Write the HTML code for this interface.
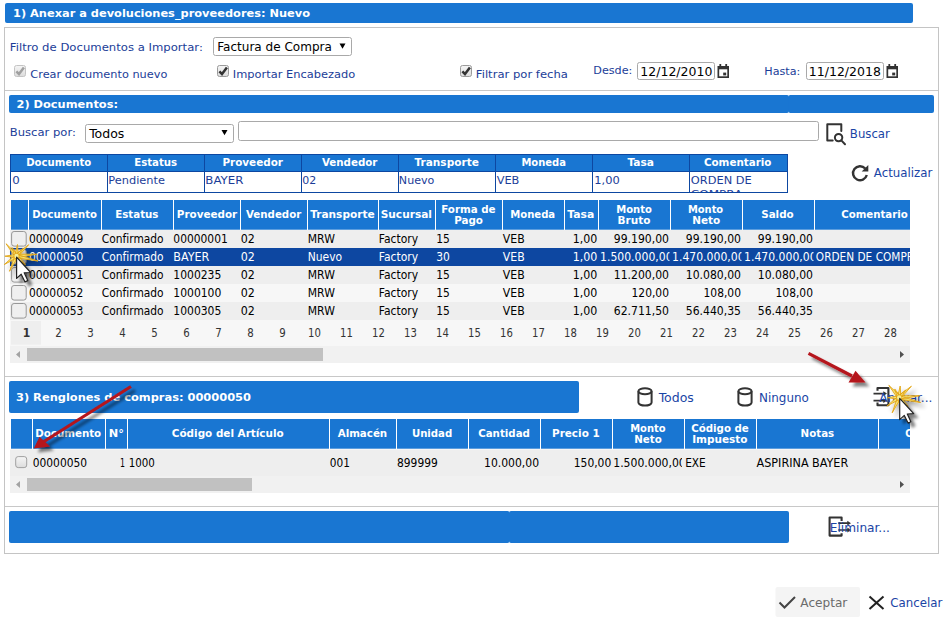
<!DOCTYPE html>
<html lang="es"><head><meta charset="utf-8"><title>Anexar a devoluciones_proveedores</title>
<style>
html,body{margin:0;padding:0;background:#fff;overflow:hidden}
svg{display:block}
.vb{font-family:'DejaVu Sans','Liberation Sans',sans-serif;font-weight:bold;font-size:11px;fill:#fff}
.hb{font-family:'DejaVu Sans','Liberation Sans',sans-serif;font-weight:bold;font-size:10px;fill:#fff}
.v{font-family:'DejaVu Sans','Liberation Sans',sans-serif;font-size:11px;fill:#1b3d98}
.t{font-family:'DejaVu Sans Condensed','Liberation Sans',sans-serif;font-size:12px;fill:#000}
.ts{font-family:'DejaVu Sans Condensed','Liberation Sans',sans-serif;font-size:12px;fill:#fff}
.tp{font-family:'DejaVu Sans Condensed','Liberation Sans',sans-serif;font-size:12px;fill:#333}
.ti{font-family:'DejaVu Sans Condensed','Liberation Sans',sans-serif;font-size:12.7px;fill:#000}
.tb{font-family:'DejaVu Sans Condensed','Liberation Sans',sans-serif;font-size:13px;fill:#1a44a5}
</style></head><body>
<svg width="946" height="617" viewBox="0 0 946 617">
<defs>
<filter id="sh" x="-40%" y="-40%" width="200%" height="200%"><feGaussianBlur in="SourceAlpha" stdDeviation="1.8"/><feOffset dx="3.5" dy="3.5"/><feComponentTransfer><feFuncA type="linear" slope="0.5"/></feComponentTransfer><feMerge><feMergeNode/><feMergeNode in="SourceGraphic"/></feMerge></filter>
<filter id="sh2" x="-40%" y="-40%" width="200%" height="200%"><feGaussianBlur in="SourceAlpha" stdDeviation="2"/><feOffset dx="4" dy="4"/><feComponentTransfer><feFuncA type="linear" slope="0.4"/></feComponentTransfer><feMerge><feMergeNode/><feMergeNode in="SourceGraphic"/></feMerge></filter>
<linearGradient id="cbg" x1="0" y1="0" x2="0" y2="1"><stop offset="0" stop-color="#f6f6f6"/><stop offset="1" stop-color="#dcdcdc"/></linearGradient>
<g id="star"><path d="M1.7,0.1 L1,-11.5 L-1.7,-0.1 Z M1.2,1.2 L12.2,-11.3 L-1.2,-1.2 Z M0.1,1.7 L20.5,-1.8 L-0.1,-1.7 Z M-0.4,1.7 L21.5,5 L0.4,-1.7 Z M-1.2,1.2 L9,9 L1.2,-1.2 Z M-1.7,0.3 L2,12 L1.7,-0.3 Z M-1.5,-0.7 L-7,15.3 L1.5,0.7 Z M-1.0,-1.4 L-12.3,8.6 L1.0,1.4 Z M-0.0,-1.7 L-11.6,0.2 L0.0,1.7 Z M1.3,-1.1 L-10.4,-12.2 L-1.3,1.1 Z M1.5,-0.8 L-4.5,-8.5 L-1.5,0.8 Z M1.3,1.1 L6.5,-7.5 L-1.3,-1.1 Z" fill="#f8e56f" fill-opacity="0.9" stroke="#e2a516" stroke-width="0.9" stroke-linejoin="round"/><circle r="2.2" fill="#f4ee9a"/></g>
<g id="cur"><path d="M0,0 L0,21.2 L4.6,17 L8.4,24.7 L11.2,23.4 L7.6,15.6 L14,15.3 Z" fill="#fff" stroke="#222" stroke-width="1.2" stroke-linejoin="round"/></g>
<g id="cyl" fill="none" stroke="#333" stroke-width="2"><path d="M1.9,4.2 V15.6 a6.6,3 0 0 0 13.2,0 V4.2"/><ellipse cx="8.5" cy="4.2" rx="6.6" ry="3"/></g>
<g id="cal"><path d="M0.5,2 h11.5 v12 h-11.5 z" fill="#333"/><rect x="2.4" y="0" width="1.8" height="3" fill="#333"/><rect x="8.3" y="0" width="1.8" height="3" fill="#333"/><rect x="2.2" y="5.3" width="8.1" height="7" fill="#fff"/><rect x="6.2" y="8.6" width="3" height="2.8" fill="#333"/></g>
</defs>

<rect x="5" y="3" width="908" height="20" fill="#1976d2" rx="2" />
<text x="13.0" y="17" class="vb" textLength="297" lengthAdjust="spacingAndGlyphs" >1) Anexar a devoluciones_proveedores: Nuevo</text>
<rect x="4.5" y="27.5" width="934" height="526" fill="#fff" stroke="#c4c4c4" stroke-width="1" />
<line x1="5" y1="90.5" x2="938" y2="90.5" stroke="#c8c8c8" stroke-width="1"/>
<line x1="5" y1="376.5" x2="938" y2="376.5" stroke="#c8c8c8" stroke-width="1"/>
<line x1="5" y1="506.5" x2="938" y2="506.5" stroke="#c8c8c8" stroke-width="1"/>
<text x="9.85" y="51.1" class="v" textLength="193.0" lengthAdjust="spacingAndGlyphs" >Filtro de Documentos a Importar:</text>
<rect x="213.5" y="37.5" width="138" height="18" fill="#fff" rx="2" stroke="#a9a9a9" stroke-width="1" />
<text x="217.35" y="50.7" class="ti" textLength="114.5" lengthAdjust="spacingAndGlyphs" >Factura de Compra</text>
<path d="M339.5,43.5 h6 l-3,5.2 z" fill="#000"/>
<rect x="14.5" y="65.5" width="11" height="11" fill="url(#cbg)" rx="2" stroke="#c4c4c4" stroke-width="1" />
<path d="M16.4,71.3 l2.6,2.7 l4.9,-6.4" fill="none" stroke="#a0a0a0" stroke-width="2.5"/>
<text x="30.35" y="77.7" class="v" textLength="137" lengthAdjust="spacingAndGlyphs" >Crear documento nuevo</text>
<rect x="217.5" y="65.5" width="11" height="11" fill="url(#cbg)" rx="2" stroke="#9b9b9b" stroke-width="1" />
<path d="M219.4,71.3 l2.6,2.7 l4.9,-6.4" fill="none" stroke="#333" stroke-width="2.5"/>
<text x="232.85" y="78" class="v" textLength="122.5" lengthAdjust="spacingAndGlyphs" >Importar Encabezado</text>
<rect x="460.5" y="65.5" width="11" height="11" fill="url(#cbg)" rx="2" stroke="#9b9b9b" stroke-width="1" />
<path d="M462.4,71.3 l2.6,2.7 l4.9,-6.4" fill="none" stroke="#333" stroke-width="2.5"/>
<text x="475.85" y="78" class="v" textLength="92.0" lengthAdjust="spacingAndGlyphs" >Filtrar por fecha</text>
<text x="593.35" y="74.3" class="v" textLength="39" lengthAdjust="spacingAndGlyphs" >Desde:</text>
<rect x="637.5" y="62.5" width="77" height="17" fill="#fff" rx="2" stroke="#a9a9a9" stroke-width="1" />
<text x="640.35" y="76" class="ti" textLength="72" lengthAdjust="spacingAndGlyphs" >12/12/2010</text>
<use href="#cal" x="717" y="64"/>
<text x="764.35" y="74.5" class="v" textLength="36" lengthAdjust="spacingAndGlyphs" >Hasta:</text>
<rect x="806.5" y="62.5" width="77" height="17" fill="#fff" rx="2" stroke="#a9a9a9" stroke-width="1" />
<text x="808.85" y="76" class="ti" textLength="72.0" lengthAdjust="spacingAndGlyphs" >11/12/2018</text>
<use href="#cal" x="886" y="64"/>
<rect x="9" y="95" width="780" height="18" fill="#1976d2" rx="2" />
<rect x="788.4" y="95" width="145.6" height="18" fill="#1976d2" rx="2" />
<text x="16.5" y="108" class="vb" textLength="101.5" lengthAdjust="spacingAndGlyphs" >2) Documentos:</text>
<text x="9.85" y="136" class="v" textLength="66.0" lengthAdjust="spacingAndGlyphs" >Buscar por:</text>
<rect x="85.5" y="124.5" width="148" height="18" fill="#fff" rx="2" stroke="#a9a9a9" stroke-width="1" />
<text x="89.35" y="137.7" class="ti" textLength="35" lengthAdjust="spacingAndGlyphs" >Todos</text>
<path d="M221.5,130 h6 l-3,5.2 z" fill="#000"/>
<rect x="238.5" y="121.5" width="580" height="19" fill="#fff" rx="2" stroke="#a9a9a9" stroke-width="1" />
<g fill="none" stroke="#333" stroke-width="2" stroke-linejoin="round" stroke-linecap="round"><path d="M841.3,131 V124.2 H827.3 V140.6 H832.7"/><circle cx="838.6" cy="137.6" r="3.7"/><path d="M841.3,140.4 L845,144.2"/></g>
<text x="849.85" y="137.8" class="tb" textLength="40.0" lengthAdjust="spacingAndGlyphs" >Buscar</text>
<rect x="10.5" y="154.5" width="777" height="38" fill="#fff" />
<rect x="10.5" y="154.5" width="777" height="17" fill="#1976d2" />
<text x="26.2" y="166.1" class="hb" textLength="65.0" lengthAdjust="spacingAndGlyphs" >Documento</text>
<text x="134.2" y="166.1" class="hb" textLength="43.0" lengthAdjust="spacingAndGlyphs" >Estatus</text>
<text x="222.45" y="166.1" class="hb" textLength="60.5" lengthAdjust="spacingAndGlyphs" >Proveedor</text>
<text x="321.95" y="166.1" class="hb" textLength="55.5" lengthAdjust="spacingAndGlyphs" >Vendedor</text>
<text x="414.45" y="166.1" class="hb" textLength="64.5" lengthAdjust="spacingAndGlyphs" >Transporte</text>
<text x="521.45" y="166.1" class="hb" textLength="44.5" lengthAdjust="spacingAndGlyphs" >Moneda</text>
<text x="627.4" y="166.1" class="hb" textLength="26.6" lengthAdjust="spacingAndGlyphs" >Tasa</text>
<text x="703.9" y="166.1" class="hb" textLength="67.6" lengthAdjust="spacingAndGlyphs" >Comentario</text>
<rect x="10.5" y="154.5" width="777" height="38" fill="none" stroke="#0d47a1" stroke-width="1" />
<line x1="10" y1="171.5" x2="788" y2="171.5" stroke="#0d47a1" stroke-width="1"/>
<line x1="107.5" y1="154" x2="107.5" y2="193" stroke="#0d47a1" stroke-width="1"/>
<line x1="204.5" y1="154" x2="204.5" y2="193" stroke="#0d47a1" stroke-width="1"/>
<line x1="301.5" y1="154" x2="301.5" y2="193" stroke="#0d47a1" stroke-width="1"/>
<line x1="398.5" y1="154" x2="398.5" y2="193" stroke="#0d47a1" stroke-width="1"/>
<line x1="495.5" y1="154" x2="495.5" y2="193" stroke="#0d47a1" stroke-width="1"/>
<line x1="592.5" y1="154" x2="592.5" y2="193" stroke="#0d47a1" stroke-width="1"/>
<line x1="689.5" y1="154" x2="689.5" y2="193" stroke="#0d47a1" stroke-width="1"/>
<text x="12.35" y="183.5" class="v" textLength="7.5" lengthAdjust="spacingAndGlyphs" >0</text>
<text x="108.35" y="183.5" class="v" textLength="56.6" lengthAdjust="spacingAndGlyphs" >Pendiente</text>
<text x="205.35" y="183.5" class="v" textLength="38" lengthAdjust="spacingAndGlyphs" >BAYER</text>
<text x="302.35" y="183.5" class="v" textLength="14" lengthAdjust="spacingAndGlyphs" >02</text>
<text x="398.85" y="183.5" class="v" textLength="35.5" lengthAdjust="spacingAndGlyphs" >Nuevo</text>
<text x="496.65" y="183.5" class="v" textLength="22.7" lengthAdjust="spacingAndGlyphs" >VEB</text>
<text x="594.35" y="183.5" class="v" textLength="25.4" lengthAdjust="spacingAndGlyphs" >1,00</text>
<svg x="689" y="172" width="98" height="20.5">
<text x="1.85" y="11.5" class="v" textLength="60.9" lengthAdjust="spacingAndGlyphs" >ORDEN DE</text>
<text x="1.85" y="25.6" class="v" textLength="51.5" lengthAdjust="spacingAndGlyphs" >COMPRA</text>
</svg>
<g fill="none" stroke="#333" stroke-width="2.4"><path d="M865.2,168.5 A7,7 0 1 0 866.8,175"/></g><path d="M868.3,165 v6.6 h-6.6 z" fill="#333"/>
<text x="873.85" y="177.4" class="tb" textLength="58.5" lengthAdjust="spacingAndGlyphs" >Actualizar</text>
<svg x="10" y="200" width="900" height="164">
<rect x="0" y="0" width="900" height="30" fill="#1976d2" />
<rect x="0" y="0" width="1" height="30" fill="#fff" />
<rect x="18" y="0" width="1" height="30" fill="#fff" />
<rect x="91" y="0" width="1" height="30" fill="#fff" />
<rect x="163" y="0" width="1" height="30" fill="#fff" />
<rect x="230" y="0" width="1" height="30" fill="#fff" />
<rect x="297" y="0" width="1" height="30" fill="#fff" />
<rect x="368" y="0" width="1" height="30" fill="#fff" />
<rect x="425" y="0" width="1" height="30" fill="#fff" />
<rect x="492" y="0" width="1" height="30" fill="#fff" />
<rect x="554" y="0" width="1" height="30" fill="#fff" />
<rect x="588" y="0" width="1" height="30" fill="#fff" />
<rect x="660" y="0" width="1" height="30" fill="#fff" />
<rect x="732" y="0" width="1" height="30" fill="#fff" />
<rect x="804" y="0" width="1" height="30" fill="#fff" />
<rect x="0" y="29.7" width="900" height="0.8" fill="#fbfbfb" />
<text x="22.2" y="18" class="hb" textLength="64.7" lengthAdjust="spacingAndGlyphs" >Documento</text>
<text x="105.2" y="18" class="hb" textLength="43.3" lengthAdjust="spacingAndGlyphs" >Estatus</text>
<text x="166.8" y="18" class="hb" textLength="60.4" lengthAdjust="spacingAndGlyphs" >Proveedor</text>
<text x="236.0" y="18" class="hb" textLength="55.2" lengthAdjust="spacingAndGlyphs" >Vendedor</text>
<text x="300.2" y="18" class="hb" textLength="64.5" lengthAdjust="spacingAndGlyphs" >Transporte</text>
<text x="370.7" y="18" class="hb" textLength="51.3" lengthAdjust="spacingAndGlyphs" >Sucursal</text>
<text x="431.2" y="13" class="hb" textLength="54.4" lengthAdjust="spacingAndGlyphs" >Forma de</text>
<text x="444.2" y="24" class="hb" textLength="28.8" lengthAdjust="spacingAndGlyphs" >Pago</text>
<text x="500.2" y="18" class="hb" textLength="45" lengthAdjust="spacingAndGlyphs" >Moneda</text>
<text x="557.2" y="18" class="hb" textLength="27" lengthAdjust="spacingAndGlyphs" >Tasa</text>
<text x="606.2" y="13" class="hb" textLength="35.6" lengthAdjust="spacingAndGlyphs" >Monto</text>
<text x="607.6" y="24" class="hb" textLength="32.9" lengthAdjust="spacingAndGlyphs" >Bruto</text>
<text x="677.9" y="13" class="hb" textLength="35.3" lengthAdjust="spacingAndGlyphs" >Monto</text>
<text x="682.2" y="24" class="hb" textLength="28" lengthAdjust="spacingAndGlyphs" >Neto</text>
<text x="751.2" y="18" class="hb" textLength="32.5" lengthAdjust="spacingAndGlyphs" >Saldo</text>
<text x="831.2" y="18" class="hb" textLength="66.5" lengthAdjust="spacingAndGlyphs" >Comentario</text>
<rect x="0" y="30" width="900" height="18" fill="#eeeeee" />
<rect x="1.6" y="31.5" width="14.6" height="14.6" fill="#efefef" rx="2.5" stroke="#979797" stroke-width="1" />
<text x="18.95" y="43" class="t" textLength="54.4" lengthAdjust="spacingAndGlyphs" >00000049</text>
<text x="91.85" y="43" class="t" textLength="61.8" lengthAdjust="spacingAndGlyphs" >Confirmado</text>
<text x="163.35" y="43" class="t" textLength="54.4" lengthAdjust="spacingAndGlyphs" >00000001</text>
<text x="230.65" y="43" class="t" textLength="14.1" lengthAdjust="spacingAndGlyphs" >02</text>
<text x="297.75" y="43" class="t" textLength="27.1" lengthAdjust="spacingAndGlyphs" >MRW</text>
<text x="368.85" y="43" class="t" textLength="39.2" lengthAdjust="spacingAndGlyphs" >Factory</text>
<text x="426.15" y="43" class="t" textLength="13.6" lengthAdjust="spacingAndGlyphs" >15</text>
<text x="492.75" y="43" class="t" textLength="21.9" lengthAdjust="spacingAndGlyphs" >VEB</text>
<text x="562.65" y="43" class="t" textLength="24.6" lengthAdjust="spacingAndGlyphs" >1,00</text>
<svg x="589.5" y="30" width="70.0" height="18">
<text x="14.25" y="13" class="t" textLength="55.2" lengthAdjust="spacingAndGlyphs" >99.190,00</text>
</svg>
<svg x="661.5" y="30" width="70.0" height="18">
<text x="14.25" y="13" class="t" textLength="55.2" lengthAdjust="spacingAndGlyphs" >99.190,00</text>
</svg>
<svg x="733.5" y="30" width="70.0" height="18">
<text x="14.25" y="13" class="t" textLength="55.2" lengthAdjust="spacingAndGlyphs" >99.190,00</text>
</svg>
<rect x="0" y="48" width="900" height="18" fill="#0d47a1" />
<rect x="1.6" y="49.5" width="14.6" height="14.6" fill="#e8e8e8" rx="2.5" stroke="#979797" stroke-width="1" />
<text x="18.95" y="61" class="ts" textLength="54.4" lengthAdjust="spacingAndGlyphs" >00000050</text>
<text x="91.85" y="61" class="ts" textLength="61.8" lengthAdjust="spacingAndGlyphs" >Confirmado</text>
<text x="163.35" y="61" class="ts" textLength="36" lengthAdjust="spacingAndGlyphs" >BAYER</text>
<text x="230.65" y="61" class="ts" textLength="14.1" lengthAdjust="spacingAndGlyphs" >02</text>
<text x="297.75" y="61" class="ts" textLength="34.4" lengthAdjust="spacingAndGlyphs" >Nuevo</text>
<text x="368.85" y="61" class="ts" textLength="39.2" lengthAdjust="spacingAndGlyphs" >Factory</text>
<text x="426.15" y="61" class="ts" textLength="13.6" lengthAdjust="spacingAndGlyphs" >30</text>
<text x="492.75" y="61" class="ts" textLength="21.9" lengthAdjust="spacingAndGlyphs" >VEB</text>
<text x="562.65" y="61" class="ts" textLength="24.6" lengthAdjust="spacingAndGlyphs" >1,00</text>
<svg x="589.5" y="48" width="70.0" height="18">
<text x="0.55" y="13" class="ts" textLength="72.5" lengthAdjust="spacingAndGlyphs" >1.500.000,00</text>
</svg>
<svg x="661.5" y="48" width="70.0" height="18">
<text x="0.55" y="13" class="ts" textLength="72.5" lengthAdjust="spacingAndGlyphs" >1.470.000,00</text>
</svg>
<svg x="733.5" y="48" width="70.0" height="18">
<text x="0.55" y="13" class="ts" textLength="72.5" lengthAdjust="spacingAndGlyphs" >1.470.000,00</text>
</svg>
<text x="805.85" y="61" class="ts" textLength="105.0" lengthAdjust="spacingAndGlyphs" >ORDEN DE COMPRA</text>
<rect x="0" y="66" width="900" height="18" fill="#eeeeee" />
<rect x="1.6" y="67.5" width="14.6" height="14.6" fill="#efefef" rx="2.5" stroke="#979797" stroke-width="1" />
<text x="18.95" y="79" class="t" textLength="54.4" lengthAdjust="spacingAndGlyphs" >00000051</text>
<text x="91.85" y="79" class="t" textLength="61.8" lengthAdjust="spacingAndGlyphs" >Confirmado</text>
<text x="163.35" y="79" class="t" textLength="48" lengthAdjust="spacingAndGlyphs" >1000235</text>
<text x="230.65" y="79" class="t" textLength="14.1" lengthAdjust="spacingAndGlyphs" >02</text>
<text x="297.75" y="79" class="t" textLength="27.1" lengthAdjust="spacingAndGlyphs" >MRW</text>
<text x="368.85" y="79" class="t" textLength="39.2" lengthAdjust="spacingAndGlyphs" >Factory</text>
<text x="426.15" y="79" class="t" textLength="13.6" lengthAdjust="spacingAndGlyphs" >15</text>
<text x="492.75" y="79" class="t" textLength="21.9" lengthAdjust="spacingAndGlyphs" >VEB</text>
<text x="562.65" y="79" class="t" textLength="24.6" lengthAdjust="spacingAndGlyphs" >1,00</text>
<svg x="589.5" y="66" width="70.0" height="18">
<text x="14.25" y="13" class="t" textLength="55.2" lengthAdjust="spacingAndGlyphs" >11.200,00</text>
</svg>
<svg x="661.5" y="66" width="70.0" height="18">
<text x="14.25" y="13" class="t" textLength="55.2" lengthAdjust="spacingAndGlyphs" >10.080,00</text>
</svg>
<svg x="733.5" y="66" width="70.0" height="18">
<text x="14.25" y="13" class="t" textLength="55.2" lengthAdjust="spacingAndGlyphs" >10.080,00</text>
</svg>
<rect x="0" y="84" width="900" height="18" fill="#f7f7f7" />
<rect x="1.6" y="85.5" width="14.6" height="14.6" fill="#efefef" rx="2.5" stroke="#979797" stroke-width="1" />
<text x="18.95" y="97" class="t" textLength="54.4" lengthAdjust="spacingAndGlyphs" >00000052</text>
<text x="91.85" y="97" class="t" textLength="61.8" lengthAdjust="spacingAndGlyphs" >Confirmado</text>
<text x="163.35" y="97" class="t" textLength="48" lengthAdjust="spacingAndGlyphs" >1000100</text>
<text x="230.65" y="97" class="t" textLength="14.1" lengthAdjust="spacingAndGlyphs" >02</text>
<text x="297.75" y="97" class="t" textLength="27.1" lengthAdjust="spacingAndGlyphs" >MRW</text>
<text x="368.85" y="97" class="t" textLength="39.2" lengthAdjust="spacingAndGlyphs" >Factory</text>
<text x="426.15" y="97" class="t" textLength="13.6" lengthAdjust="spacingAndGlyphs" >15</text>
<text x="492.75" y="97" class="t" textLength="21.9" lengthAdjust="spacingAndGlyphs" >VEB</text>
<text x="562.65" y="97" class="t" textLength="24.6" lengthAdjust="spacingAndGlyphs" >1,00</text>
<svg x="589.5" y="84" width="70.0" height="18">
<text x="32.05" y="13" class="t" textLength="37.4" lengthAdjust="spacingAndGlyphs" >120,00</text>
</svg>
<svg x="661.5" y="84" width="70.0" height="18">
<text x="32.05" y="13" class="t" textLength="37.4" lengthAdjust="spacingAndGlyphs" >108,00</text>
</svg>
<svg x="733.5" y="84" width="70.0" height="18">
<text x="32.05" y="13" class="t" textLength="37.4" lengthAdjust="spacingAndGlyphs" >108,00</text>
</svg>
<rect x="0" y="102" width="900" height="18" fill="#eeeeee" />
<rect x="1.6" y="103.5" width="14.6" height="14.6" fill="#efefef" rx="2.5" stroke="#979797" stroke-width="1" />
<text x="18.95" y="115" class="t" textLength="54.4" lengthAdjust="spacingAndGlyphs" >00000053</text>
<text x="91.85" y="115" class="t" textLength="61.8" lengthAdjust="spacingAndGlyphs" >Confirmado</text>
<text x="163.35" y="115" class="t" textLength="48" lengthAdjust="spacingAndGlyphs" >1000305</text>
<text x="230.65" y="115" class="t" textLength="14.1" lengthAdjust="spacingAndGlyphs" >02</text>
<text x="297.75" y="115" class="t" textLength="27.1" lengthAdjust="spacingAndGlyphs" >MRW</text>
<text x="368.85" y="115" class="t" textLength="39.2" lengthAdjust="spacingAndGlyphs" >Factory</text>
<text x="426.15" y="115" class="t" textLength="13.6" lengthAdjust="spacingAndGlyphs" >15</text>
<text x="492.75" y="115" class="t" textLength="21.9" lengthAdjust="spacingAndGlyphs" >VEB</text>
<text x="562.65" y="115" class="t" textLength="24.6" lengthAdjust="spacingAndGlyphs" >1,00</text>
<svg x="589.5" y="102" width="70.0" height="18">
<text x="14.25" y="13" class="t" textLength="55.2" lengthAdjust="spacingAndGlyphs" >62.711,50</text>
</svg>
<svg x="661.5" y="102" width="70.0" height="18">
<text x="14.25" y="13" class="t" textLength="55.2" lengthAdjust="spacingAndGlyphs" >56.440,35</text>
</svg>
<svg x="733.5" y="102" width="70.0" height="18">
<text x="14.25" y="13" class="t" textLength="55.2" lengthAdjust="spacingAndGlyphs" >56.440,35</text>
</svg>
<rect x="0" y="120" width="900" height="26.2" fill="#f7f7f7" />
<rect x="1" y="121" width="30" height="23.7" fill="#eeeeee" />
<text x="16.5" y="137" class="tp" text-anchor="middle" style="font-weight:bold">1</text>
<text x="48.5" y="137" class="tp" text-anchor="middle" textLength="6.5" lengthAdjust="spacingAndGlyphs">2</text>
<text x="80.5" y="137" class="tp" text-anchor="middle" textLength="6.5" lengthAdjust="spacingAndGlyphs">3</text>
<text x="112.5" y="137" class="tp" text-anchor="middle" textLength="6.5" lengthAdjust="spacingAndGlyphs">4</text>
<text x="144.5" y="137" class="tp" text-anchor="middle" textLength="6.5" lengthAdjust="spacingAndGlyphs">5</text>
<text x="176.5" y="137" class="tp" text-anchor="middle" textLength="6.5" lengthAdjust="spacingAndGlyphs">6</text>
<text x="208.5" y="137" class="tp" text-anchor="middle" textLength="6.5" lengthAdjust="spacingAndGlyphs">7</text>
<text x="240.5" y="137" class="tp" text-anchor="middle" textLength="6.5" lengthAdjust="spacingAndGlyphs">8</text>
<text x="272.5" y="137" class="tp" text-anchor="middle" textLength="6.5" lengthAdjust="spacingAndGlyphs">9</text>
<text x="304.5" y="137" class="tp" text-anchor="middle" textLength="12.8" lengthAdjust="spacingAndGlyphs">10</text>
<text x="336.5" y="137" class="tp" text-anchor="middle" textLength="12.8" lengthAdjust="spacingAndGlyphs">11</text>
<text x="368.5" y="137" class="tp" text-anchor="middle" textLength="12.8" lengthAdjust="spacingAndGlyphs">12</text>
<text x="400.5" y="137" class="tp" text-anchor="middle" textLength="12.8" lengthAdjust="spacingAndGlyphs">13</text>
<text x="432.5" y="137" class="tp" text-anchor="middle" textLength="12.8" lengthAdjust="spacingAndGlyphs">14</text>
<text x="464.5" y="137" class="tp" text-anchor="middle" textLength="12.8" lengthAdjust="spacingAndGlyphs">15</text>
<text x="496.5" y="137" class="tp" text-anchor="middle" textLength="12.8" lengthAdjust="spacingAndGlyphs">16</text>
<text x="528.5" y="137" class="tp" text-anchor="middle" textLength="12.8" lengthAdjust="spacingAndGlyphs">17</text>
<text x="560.5" y="137" class="tp" text-anchor="middle" textLength="12.8" lengthAdjust="spacingAndGlyphs">18</text>
<text x="592.5" y="137" class="tp" text-anchor="middle" textLength="12.8" lengthAdjust="spacingAndGlyphs">19</text>
<text x="624.5" y="137" class="tp" text-anchor="middle" textLength="12.8" lengthAdjust="spacingAndGlyphs">20</text>
<text x="656.5" y="137" class="tp" text-anchor="middle" textLength="12.8" lengthAdjust="spacingAndGlyphs">21</text>
<text x="688.5" y="137" class="tp" text-anchor="middle" textLength="12.8" lengthAdjust="spacingAndGlyphs">22</text>
<text x="720.5" y="137" class="tp" text-anchor="middle" textLength="12.8" lengthAdjust="spacingAndGlyphs">23</text>
<text x="752.5" y="137" class="tp" text-anchor="middle" textLength="12.8" lengthAdjust="spacingAndGlyphs">24</text>
<text x="784.5" y="137" class="tp" text-anchor="middle" textLength="12.8" lengthAdjust="spacingAndGlyphs">25</text>
<text x="816.5" y="137" class="tp" text-anchor="middle" textLength="12.8" lengthAdjust="spacingAndGlyphs">26</text>
<text x="848.5" y="137" class="tp" text-anchor="middle" textLength="12.8" lengthAdjust="spacingAndGlyphs">27</text>
<text x="880.5" y="137" class="tp" text-anchor="middle" textLength="12.8" lengthAdjust="spacingAndGlyphs">28</text>
<rect x="0" y="146" width="900" height="17" fill="#f1f1f1" />
<rect x="17" y="148" width="296" height="13" fill="#c1c1c1" />
<path d="M10,151 v7 l-4,-3.5 z" fill="#a3a3a3"/><path d="M890,151 v7 l4,-3.5 z" fill="#505050"/>
</svg>
<rect x="9" y="381" width="570" height="32" fill="#1976d2" rx="2" />
<text x="16.0" y="400.5" class="vb" textLength="235" lengthAdjust="spacingAndGlyphs" >3) Renglones de compras: 00000050</text>
<use href="#cyl" x="636.5" y="387"/>
<text x="658.85" y="401.6" class="tb" textLength="35.0" lengthAdjust="spacingAndGlyphs" >Todos</text>
<use href="#cyl" x="736.5" y="387"/>
<text x="759.05" y="401.6" class="tb" textLength="49.8" lengthAdjust="spacingAndGlyphs" >Ninguno</text>
<g fill="none" stroke="#333" stroke-width="2.1" stroke-linejoin="round"><path d="M877.5,390.7 V388 H888.4 V405.2 H877.5 V402.5"/><path d="M873.5,393.6 H884.5 M873.5,400.7 H884.5" stroke-width="1.7"/></g><path d="M883.3,391.2 L887,393.6 L883.3,396 Z M883.3,398.3 L887,400.7 L883.3,403.1 Z" fill="#333"/>
<text x="879.35" y="402" class="tb" textLength="53" lengthAdjust="spacingAndGlyphs" >Anexar...</text>
<svg x="10" y="419" width="900" height="75">
<rect x="0" y="0" width="900" height="30" fill="#1976d2" />
<rect x="0" y="0" width="1" height="30" fill="#fff" />
<rect x="22" y="0" width="1" height="30" fill="#fff" />
<rect x="95" y="0" width="1" height="30" fill="#fff" />
<rect x="117" y="0" width="1" height="30" fill="#fff" />
<rect x="319" y="0" width="1" height="30" fill="#fff" />
<rect x="386" y="0" width="1" height="30" fill="#fff" />
<rect x="458" y="0" width="1" height="30" fill="#fff" />
<rect x="530" y="0" width="1" height="30" fill="#fff" />
<rect x="602" y="0" width="1" height="30" fill="#fff" />
<rect x="674" y="0" width="1" height="30" fill="#fff" />
<rect x="746" y="0" width="1" height="30" fill="#fff" />
<rect x="868" y="0" width="1" height="30" fill="#fff" />
<text x="25.2" y="18" class="hb" textLength="66" lengthAdjust="spacingAndGlyphs" >Documento</text>
<text x="98.7" y="18" class="hb" textLength="15.1" lengthAdjust="spacingAndGlyphs" >N°</text>
<text x="161.8" y="18" class="hb" textLength="111.9" lengthAdjust="spacingAndGlyphs" >Código del Artículo</text>
<text x="327.7" y="18" class="hb" textLength="49.5" lengthAdjust="spacingAndGlyphs" >Almacén</text>
<text x="401.9" y="18" class="hb" textLength="40.3" lengthAdjust="spacingAndGlyphs" >Unidad</text>
<text x="468.2" y="18" class="hb" textLength="51.7" lengthAdjust="spacingAndGlyphs" >Cantidad</text>
<text x="542.0" y="18" class="hb" textLength="47.7" lengthAdjust="spacingAndGlyphs" >Precio 1</text>
<text x="620.2" y="13" class="hb" textLength="35.4" lengthAdjust="spacingAndGlyphs" >Monto</text>
<text x="624.2" y="24" class="hb" textLength="27.5" lengthAdjust="spacingAndGlyphs" >Neto</text>
<text x="681.2" y="13" class="hb" textLength="57.6" lengthAdjust="spacingAndGlyphs" >Código de</text>
<text x="682.2" y="24" class="hb" textLength="55.4" lengthAdjust="spacingAndGlyphs" >Impuesto</text>
<text x="790.6" y="18" class="hb" textLength="33.6" lengthAdjust="spacingAndGlyphs" >Notas</text>
<text x="895.2" y="18" class="hb" textLength="60" lengthAdjust="spacingAndGlyphs" >Comentario</text>
<rect x="0" y="29.7" width="900" height="0.8" fill="#fbfbfb" />
<rect x="0" y="30.5" width="900" height="26.5" fill="#eeeeee" />
<text x="22.75" y="48" class="t" textLength="54.3" lengthAdjust="spacingAndGlyphs" >00000050</text>
<text x="109.95" y="48" class="t" textLength="5.0" lengthAdjust="spacingAndGlyphs" >1</text>
<text x="118.75" y="48" class="t" textLength="26.1" lengthAdjust="spacingAndGlyphs" >1000</text>
<text x="319.85" y="48" class="t" textLength="20.1" lengthAdjust="spacingAndGlyphs" >001</text>
<text x="386.95" y="48" class="t" textLength="40.9" lengthAdjust="spacingAndGlyphs" >899999</text>
<text x="474.05" y="48" class="t" textLength="55.0" lengthAdjust="spacingAndGlyphs" >10.000,00</text>
<text x="563.75" y="48" class="t" textLength="37.5" lengthAdjust="spacingAndGlyphs" >150,00</text>
<svg x="603" y="30" width="69" height="28">
<text x="0.25" y="18" class="t" textLength="72.5" lengthAdjust="spacingAndGlyphs" >1.500.000,00</text>
</svg>
<text x="675.15" y="48" class="t" textLength="20.6" lengthAdjust="spacingAndGlyphs" >EXE</text>
<text x="746.55" y="48" class="t" textLength="91.7" lengthAdjust="spacingAndGlyphs" >ASPIRINA BAYER</text>
<rect x="5.7" y="37.6" width="11" height="11" fill="url(#cbg)" rx="2.5" stroke="#a0a0a0" stroke-width="1" />
<rect x="0" y="57" width="900" height="17" fill="#f1f1f1" />
<rect x="17" y="59" width="225" height="13" fill="#c1c1c1" />
<path d="M10,62 v7 l-4,-3.5 z" fill="#a3a3a3"/><path d="M890,62 v7 l4,-3.5 z" fill="#505050"/>
</svg>
<rect x="9" y="511" width="500.5" height="32" fill="#1976d2" rx="2" />
<rect x="509" y="511" width="280" height="32" fill="#1976d2" rx="2" />
<g fill="none" stroke="#333" stroke-width="2.1" stroke-linejoin="round"><path d="M841.6,521 V517.5 H829.6 V535.6 H841.6 V533.3"/><path d="M838.2,523.2 H848.5 M838.2,530 H848.5" stroke-width="1.7"/></g><path d="M847.3,520.8 L851,523.2 L847.3,525.6 Z M847.3,527.6 L851,530 L847.3,532.4 Z" fill="#333"/>
<text x="829.85" y="532" class="tb" textLength="60.0" lengthAdjust="spacingAndGlyphs" >Eliminar...</text>
<rect x="775.5" y="587" width="84.5" height="30" fill="#f4f4f4" rx="2" />
<path d="M779.5,602.5 L784.5,607.5 L795,597" fill="none" stroke="#444" stroke-width="2"/>
<text x="800.35" y="607" class="tb" textLength="47" lengthAdjust="spacingAndGlyphs" style="fill:#6b6b6b" >Aceptar</text>
<path d="M869.5,596.5 L883.5,609 M883.5,596.5 L869.5,609" fill="none" stroke="#222" stroke-width="2"/>
<text x="890.35" y="607" class="tb" textLength="52" lengthAdjust="spacingAndGlyphs" >Cancelar</text>
<g filter="url(#sh)"><path d="M131,386.5 L44,441.5" stroke="#b5141c" stroke-width="3.2" fill="none"/><path d="M33.8,448.5 L39.5,436.8 L50,446.6 Z" fill="#b5141c"/></g>
<g filter="url(#sh)"><path d="M808.5,353.3 L852,376" stroke="#b5141c" stroke-width="3.2" fill="none"/><path d="M865.5,382.6 L855.5,370.8 L848.5,382.4 Z" fill="#b5141c"/></g>
<g filter="url(#sh2)"><use href="#star" x="16.5" y="256"/></g><g filter="url(#sh)"><use href="#cur" x="16.6" y="257.2"/></g>
<g filter="url(#sh2)"><use href="#star" x="899.2" y="397.5"/></g><g filter="url(#sh)"><use href="#cur" x="899.7" y="398.4"/></g>
</svg></body></html>
